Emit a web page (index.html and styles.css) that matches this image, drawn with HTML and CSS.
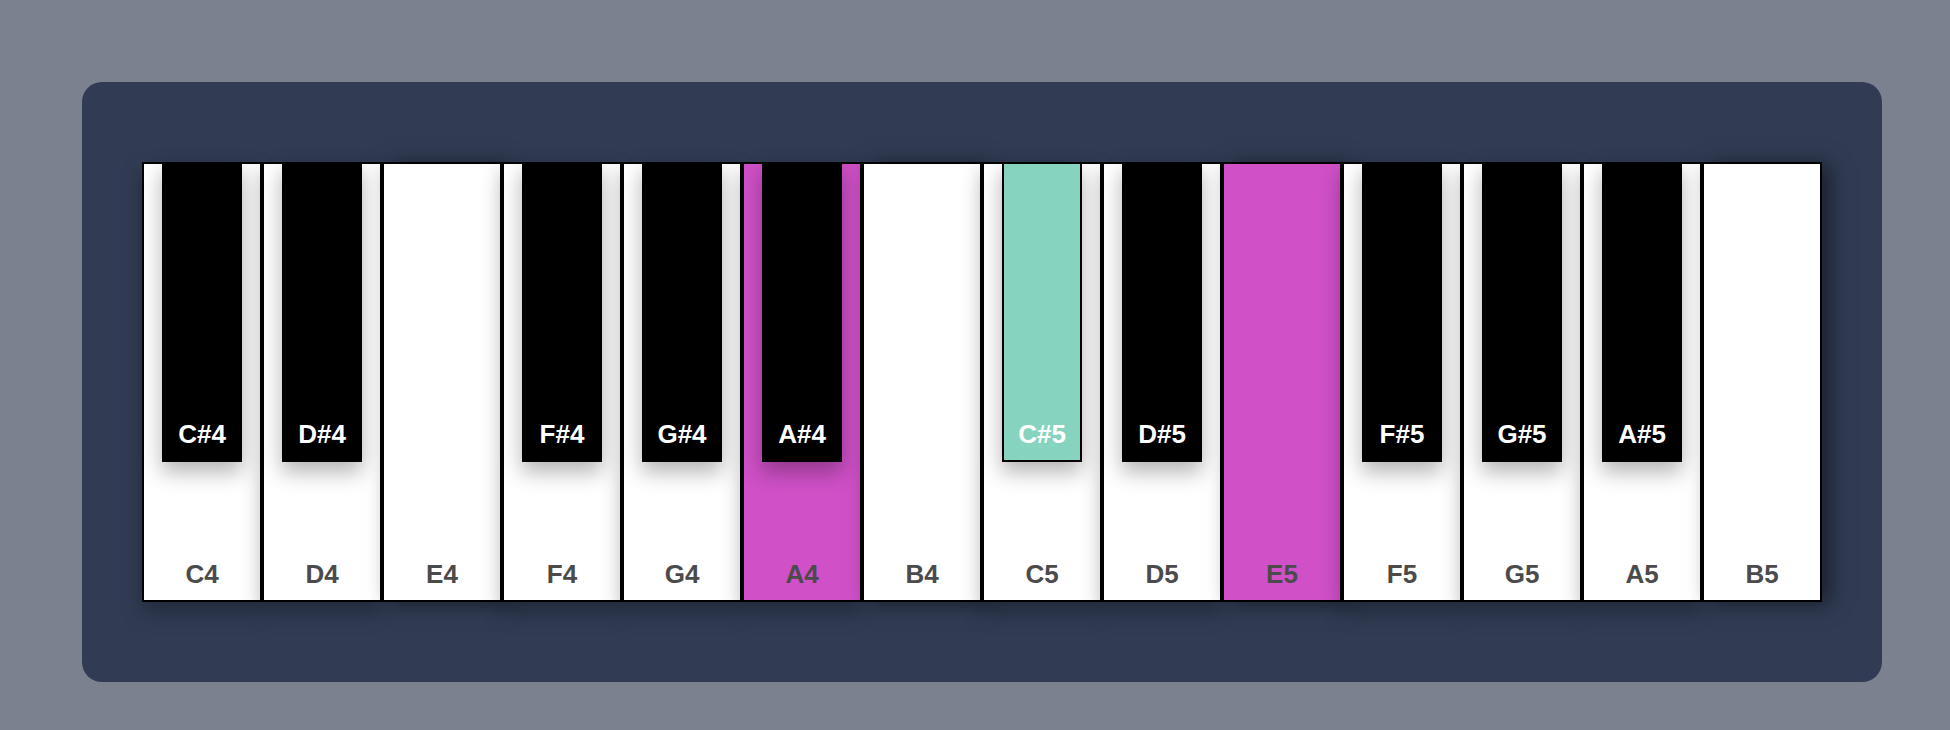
FILE: index.html
```html
<!DOCTYPE html>
<html lang="en">
<head>
<meta charset="utf-8">
<title>Piano</title>
<link rel="stylesheet" href="styles.css">
</head>
<body>
<main class="piano">
  <div class="keys">
    <div class="slot"><button class="key white">C4</button><button class="key black">C#4</button></div>
    <div class="slot"><button class="key white">D4</button><button class="key black">D#4</button></div>
    <div class="slot"><button class="key white solo">E4</button></div>
    <div class="slot"><button class="key white">F4</button><button class="key black">F#4</button></div>
    <div class="slot"><button class="key white">G4</button><button class="key black">G#4</button></div>
    <div class="slot"><button class="key white pink">A4</button><button class="key black">A#4</button></div>
    <div class="slot"><button class="key white solo">B4</button></div>
    <div class="slot"><button class="key white">C5</button><button class="key black teal">C#5</button></div>
    <div class="slot"><button class="key white">D5</button><button class="key black">D#5</button></div>
    <div class="slot"><button class="key white solo pink">E5</button></div>
    <div class="slot"><button class="key white">F5</button><button class="key black">F#5</button></div>
    <div class="slot"><button class="key white">G5</button><button class="key black">G#5</button></div>
    <div class="slot"><button class="key white">A5</button><button class="key black">A#5</button></div>
    <div class="slot"><button class="key white solo">B5</button></div>
  </div>
</main>
</body>
</html>
```
FILE: styles.css
```css
* {
  box-sizing: border-box;
}

body {
  margin: 0;
  padding: 82px 68px 48px 82px;
  background: #7c8190;
  font-family: "Liberation Sans", Arial, sans-serif;
}

.piano {
  padding: 80px 60px;
  border-radius: 20px;
  background: #313c54;
}

.keys {
  display: grid;
  grid-template-columns: repeat(14, 1fr);
}

.slot {
  display: grid;
}

.key {
  display: flex;
  grid-area: 1 / 1;
  align-items: flex-end;
  justify-content: center;
  margin: 0;
  padding: 0 0 10px;
  border: 2px solid #000;
  border-radius: 0;
  font: bold 26px/32px "Liberation Sans", Arial, sans-serif;
  box-shadow: 0 10px 20px rgba(0, 0, 0, 0.3);
  cursor: pointer;
}

.white {
  height: 440px;
  background: #fff;
  color: #4b4b4b;
}

.black {
  z-index: 1;
  justify-self: center;
  width: 66.667%;
  height: 300px;
  background: #000;
  color: #fff;
}

.solo {
  box-shadow: 8px 2px 20px rgba(0, 0, 0, 0.5);
}

.pink {
  background: #cf50c7;
}

.teal {
  background: #86d4bf;
}
```
